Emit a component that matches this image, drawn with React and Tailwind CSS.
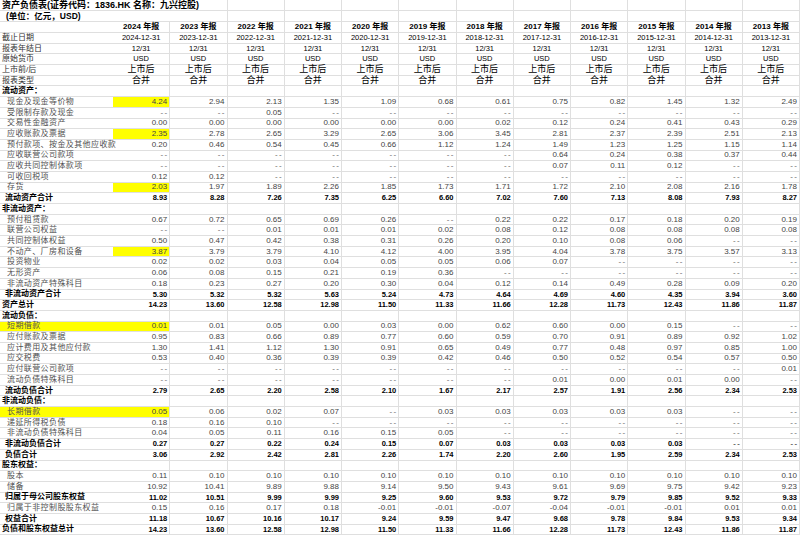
import React from "react";

const years = ["2024", "2023", "2022", "2021", "2020", "2019", "2018", "2017", "2016", "2015", "2014", "2013"];
const D = "--";

// kind: sec = section heading, item = indented line, sub = subtotal, top = grand total
const rows = [
  { label: "流动资产：", kind: "sec" },
  { label: "现金及现金等价物", kind: "item", hl: "val", v: ["4.24", "2.94", "2.13", "1.35", "1.09", "0.68", "0.61", "0.75", "0.82", "1.45", "1.32", "2.49"] },
  { label: "受限制存款及现金", kind: "item", v: [D, D, "0.05", D, D, D, D, D, D, D, D, D] },
  { label: "交易性金融资产", kind: "item", v: ["0.00", "0.00", "0.00", "0.00", "0.00", "0.00", "0.02", "0.12", "0.24", "0.41", "0.43", "0.29"] },
  { label: "应收账款及票据", kind: "item", hl: "val", v: ["2.35", "2.78", "2.65", "3.29", "2.65", "3.06", "3.45", "2.81", "2.37", "2.39", "2.51", "2.13"] },
  { label: "预付款项、按金及其他应收款", kind: "item", v: ["0.20", "0.46", "0.54", "0.45", "0.66", "1.12", "1.24", "1.49", "1.23", "1.25", "1.15", "1.14"] },
  { label: "应收联营公司款项", kind: "item", v: [D, D, D, D, D, D, D, "0.64", "0.24", "0.38", "0.37", "0.44"] },
  { label: "应收共同控制体款项", kind: "item", v: [D, D, D, D, D, D, D, "0.07", "0.11", "0.12", D, D] },
  { label: "可收回税项", kind: "item", v: ["0.12", "0.12", D, D, D, D, D, D, D, D, D, D] },
  { label: "存货", kind: "item", hl: "val", v: ["2.03", "1.97", "1.89", "2.26", "1.85", "1.73", "1.71", "1.72", "2.10", "2.08", "2.16", "1.78"] },
  { label: "流动资产合计", kind: "sub", v: ["8.93", "8.28", "7.26", "7.35", "6.25", "6.60", "7.02", "7.60", "7.13", "8.08", "7.93", "8.27"] },
  { label: "非流动资产：", kind: "sec" },
  { label: "预付租赁款", kind: "item", v: ["0.67", "0.72", "0.65", "0.69", "0.26", D, "0.22", "0.22", "0.17", "0.18", "0.20", "0.19"] },
  { label: "联营公司权益", kind: "item", v: [D, D, "0.01", "0.01", "0.01", "0.02", "0.08", "0.12", "0.08", "0.08", "0.08", "0.08"] },
  { label: "共同控制体权益", kind: "item", v: ["0.50", "0.47", "0.42", "0.38", "0.31", "0.26", "0.20", "0.10", "0.08", "0.06", D, D] },
  { label: "不动产、厂房和设备", kind: "item", hl: "val", v: ["3.87", "3.79", "3.79", "4.10", "4.12", "4.00", "3.95", "4.04", "3.78", "3.75", "3.57", "3.13"] },
  { label: "投资物业", kind: "item", v: ["0.02", "0.02", "0.03", "0.04", "0.05", "0.05", "0.06", "0.07", D, D, D, D] },
  { label: "无形资产", kind: "item", v: ["0.06", "0.08", "0.15", "0.21", "0.19", "0.36", D, D, D, D, D, D] },
  { label: "非流动资产特殊科目", kind: "item", v: ["0.18", "0.23", "0.27", "0.20", "0.30", "0.04", "0.12", "0.14", "0.49", "0.28", "0.09", "0.20"] },
  { label: "非流动资产合计", kind: "sub", v: ["5.30", "5.32", "5.32", "5.63", "5.24", "4.73", "4.64", "4.69", "4.60", "4.35", "3.94", "3.60"] },
  { label: "资产总计", kind: "top", v: ["14.23", "13.60", "12.58", "12.98", "11.50", "11.33", "11.66", "12.28", "11.73", "12.43", "11.86", "11.87"] },
  { label: "流动负债：", kind: "sec" },
  { label: "短期借款", kind: "item", hl: "row", v: ["0.01", "0.01", "0.05", "0.00", "0.03", "0.00", "0.62", "0.60", "0.00", "0.15", D, D] },
  { label: "应付账款及票据", kind: "item", v: ["0.95", "0.83", "0.66", "0.89", "0.77", "0.60", "0.59", "0.70", "0.91", "0.89", "0.92", "1.02"] },
  { label: "应计费用及其他应付款", kind: "item", v: ["1.30", "1.41", "1.12", "1.30", "0.91", "0.65", "0.49", "0.77", "0.48", "0.97", "0.85", "1.00"] },
  { label: "应交税费", kind: "item", v: ["0.53", "0.40", "0.36", "0.39", "0.39", "0.42", "0.46", "0.50", "0.52", "0.54", "0.57", "0.50"] },
  { label: "应付联营公司款项", kind: "item", v: [D, D, D, D, D, D, D, D, D, D, D, "0.01"] },
  { label: "流动负债特殊科目", kind: "item", v: [D, D, D, D, D, D, D, "0.01", "0.00", "0.01", "0.00", D] },
  { label: "流动负债合计", kind: "sub", v: ["2.79", "2.65", "2.20", "2.58", "2.10", "1.67", "2.17", "2.57", "1.91", "2.56", "2.34", "2.53"] },
  { label: "非流动负债：", kind: "sec" },
  { label: "长期借款", kind: "item", hl: "row", v: ["0.05", "0.06", "0.02", "0.07", D, "0.03", "0.03", "0.03", "0.03", "0.03", D, D] },
  { label: "递延所得税负债", kind: "item", v: ["0.18", "0.16", "0.10", D, D, D, D, D, D, D, D, D] },
  { label: "非流动负债特殊科目", kind: "item", v: ["0.04", "0.05", "0.11", "0.16", "0.15", "0.05", D, D, D, D, D, D] },
  { label: "非流动负债合计", kind: "sub", v: ["0.27", "0.27", "0.22", "0.24", "0.15", "0.07", "0.03", "0.03", "0.03", "0.03", D, D] },
  { label: "负债合计", kind: "sub", v: ["3.06", "2.92", "2.42", "2.81", "2.26", "1.74", "2.20", "2.60", "1.95", "2.59", "2.34", "2.53"] },
  { label: "股东权益：", kind: "sec" },
  { label: "股本", kind: "item", v: ["0.11", "0.10", "0.10", "0.10", "0.10", "0.10", "0.10", "0.10", "0.10", "0.10", "0.10", "0.10"] },
  { label: "储备", kind: "item", v: ["10.92", "10.41", "9.89", "9.88", "9.14", "9.50", "9.43", "9.61", "9.69", "9.75", "9.42", "9.23"] },
  { label: "归属于母公司股东权益", kind: "sub", v: ["11.02", "10.51", "9.99", "9.99", "9.25", "9.60", "9.53", "9.72", "9.79", "9.85", "9.52", "9.33"] },
  { label: "归属于非控制股股东权益", kind: "item", v: ["0.15", "0.16", "0.17", "0.18", "-0.01", "-0.01", "-0.07", "-0.04", "-0.01", "-0.01", "0.01", "0.01"] },
  { label: "权益合计", kind: "sub", v: ["11.18", "10.67", "10.16", "10.17", "9.24", "9.59", "9.47", "9.68", "9.78", "9.84", "9.53", "9.34"] },
  { label: "负债和股东权益总计", kind: "top", v: ["14.23", "13.60", "12.58", "12.98", "11.50", "11.33", "11.66", "12.28", "11.73", "12.43", "11.86", "11.87"] },
];

const infoRows = [
  { label: "截止日期", v: years.map((y) => `${y}-12-31`) },
  { label: "报表年结日", v: years.map(() => "12/31") },
  { label: "原始货币", v: years.map(() => "USD") },
  { label: "上市前/后", v: years.map(() => "上市后"), cjk: true },
  { label: "报表类型", v: years.map(() => "合并"), cjk: true },
];

const grid = "grid grid-cols-[113px_repeat(12,minmax(0,1fr))]";
const cell = "border-r border-b border-[#dfdfdf] flex items-center whitespace-nowrap overflow-visible";

function DataRow({ row }) {
  const bold = row.kind !== "item";
  const labelCls =
    row.kind === "item"
      ? "pl-[7px] text-[#505050] tracking-[0.4px]"
      : row.kind === "sub"
      ? "pl-[5px] font-bold text-black"
      : "pl-[2px] font-bold text-black";
  return (
    <div className={`${grid} h-[10.7px]`}>
      <div className={`${cell} border-r-0 text-[8px] ${labelCls} ${row.hl === "row" ? "bg-[#ffff00]" : ""}`}>
        {row.label}
      </div>
      {years.map((y, i) => {
        const t = row.v ? row.v[i] : "";
        return (
          <div
            key={y}
            className={`${cell} justify-end pr-[2px] ${
              bold ? "text-[7.5px] font-bold text-black" : "text-[8px] text-[#444]"
            } ${i === 0 && row.hl ? "bg-[#ffff00]" : ""}`}
          >
            {t === D ? <span className="tracking-[1.5px] mr-[-1.5px] text-[#666]">{t}</span> : t}
          </div>
        );
      })}
    </div>
  );
}

export default function App() {
  return (
    <div className="w-[800px] h-[536px] overflow-hidden bg-white font-['Liberation_Sans','Noto_Sans_CJK_SC',sans-serif] leading-none">
      {/* title rows */}
      <div className={`${grid} h-[11px]`}>
        <div className={`${cell} col-span-2 border-r-0 pl-[2px] text-[9px] font-bold text-black`}>
          资产负债表(证券代码：1836.HK 名称：九兴控股)
        </div>
        {years.slice(1).map((y) => (
          <div key={y} className={cell} />
        ))}
      </div>
      <div className={`${grid} h-[11px]`}>
        <div className={`${cell} col-span-2 border-r-0 pl-[6px] text-[8.5px] font-bold text-black`}>
          (单位：亿元，USD)
        </div>
        {years.slice(1).map((y) => (
          <div key={y} className={cell} />
        ))}
      </div>
      {/* year header */}
      <div className={`${grid} h-[11px]`}>
        <div className={`${cell} border-r-0`} />
        {years.map((y) => (
          <div key={y} className={`${cell} justify-center text-[8px] font-bold text-black`}>
            {y} 年报
          </div>
        ))}
      </div>
      {infoRows.map((r) => (
        <div key={r.label} className={`${grid} h-[10.7px]`}>
          <div className={`${cell} border-r-0 pl-[2px] text-[8px] text-[#303030]`}>{r.label}</div>
          {r.v.map((t, i) => (
            <div
              key={i}
              className={`${cell} justify-center text-black ${r.cjk ? "text-[9px]" : "text-[7.5px]"}`}
            >
              {t}
            </div>
          ))}
        </div>
      ))}
      {rows.map((r) => (
        <DataRow key={r.label} row={r} />
      ))}
    </div>
  );
}
